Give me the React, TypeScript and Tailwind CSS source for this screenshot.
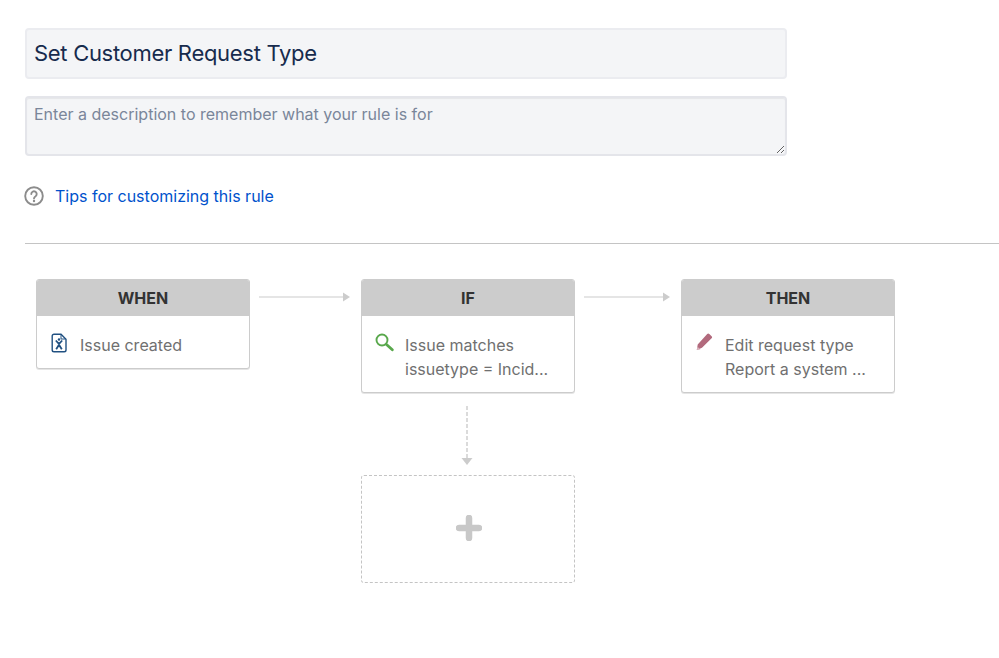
import React from 'react';

const font = { fontFamily: 'Inter, "Liberation Sans", sans-serif' };

function ArrowRight({ width }: { width: number }) {
  return (
    <svg width={width} height={10} viewBox={`0 0 ${width} 10`} className="shrink-0">
      <line x1="0" y1="5" x2={width - 6} y2="5" stroke="#cccccc" strokeWidth="1.2" />
      <path d={`M${width - 7} 0.5 L${width} 5 L${width - 7} 9.5 Z`} fill="#cccccc" />
    </svg>
  );
}

function ArrowDown() {
  return (
    <svg width={14} height={60} viewBox="0 0 14 60" className="block">
      <line x1="7" y1="0" x2="7" y2="52" stroke="#cccccc" strokeWidth="1.4" strokeDasharray="4 2" />
      <path d="M1.500 52 L12.500 52 L7 59 Z" fill="#cccccc" />
    </svg>
  );
}

function IssueIcon() {
  return (
    <svg width={18} height={20} viewBox="0 0 18 20" fill="none">
      <path d="M4 1.200h7l5 5V17a1.800 1.800 0 0 1-1.800 1.800H4A1.800 1.800 0 0 1 2.200 17V3A1.800 1.800 0 0 1 4 1.200Z" stroke="#205081" strokeWidth="1.400" />
      <path d="M11 1.500V6h4.600" stroke="#205081" strokeWidth="1" />
      <circle cx="9" cy="6.500" r="1.200" fill="#205081" />
      <path d="M5.800 7.500l3.200 3.400 3.200-3.400M9 10.500v1.500M6.200 16.200l2.800-4.400 2.800 4.400" stroke="#205081" strokeWidth="1.800" />
    </svg>
  );
}

function SearchIcon() {
  return (
    <svg width={19} height={19} viewBox="0 0 19 19" fill="none">
      <circle cx="7" cy="7" r="5.500" stroke="#59a84c" strokeWidth="1.900" />
      <path d="M11.500 11.500l5.800 5.300" stroke="#59a84c" strokeWidth="2.800" strokeLinecap="round" />
    </svg>
  );
}

function PencilIcon() {
  return (
    <svg width={18} height={18} viewBox="0 0 18 18">
      <path d="M12.200 1a1.500 1.500 0 0 1 2.100 0l2.300 2.200a1.500 1.500 0 0 1 0 2.100L7 14.800 1.800 17l0.900-5.600Z" fill="#b26a7d" />
      <path d="M1.800 17l0.600-3.600 3 3.100Z" fill="#d9b3bd" />
    </svg>
  );
}

function HelpIcon() {
  return (
    <svg width={20} height={20} viewBox="0 0 20 20" fill="none" className="-ml-[1px]">
      <circle cx="10" cy="10" r="8.800" stroke="#8c8c8c" strokeWidth="1.900" />
      <path d="M7.300 8a2.700 2.700 0 1 1 4.300 2.200c-1 .7-1.600 1.200-1.600 2.200" stroke="#8c8c8c" strokeWidth="1.900" strokeLinecap="round" />
      <circle cx="10" cy="15" r="1.200" fill="#8c8c8c" />
    </svg>
  );
}

function RuleCard({ title, icon, lines }: { title: string; icon: React.ReactNode; lines: string[] }) {
  return (
    <div className="w-[214px] shrink-0 overflow-hidden rounded-[3px] border border-[#cccccc] bg-white shadow-[0_1px_0_rgba(0,0,0,0.1)]">
      <div className="flex h-[36px] items-center justify-center bg-[#cccccc] text-[16px] font-bold text-[#333333]">
        {title}
      </div>
      <div className="flex gap-[11px] pb-[11px] pl-[13px] pt-[17px]">
        <div className="w-[19px] shrink-0">{icon}</div>
        <div className="text-[16px] leading-[24px] text-[#707070]">
          {lines.map((line) => (
            <div key={line}>{line}</div>
          ))}
        </div>
      </div>
    </div>
  );
}

export default function App() {
  return (
    <div className="h-[658px] w-[999px] overflow-hidden bg-white pt-[28px]" style={font}>
      <div className="pl-[25px]">
        <input
          readOnly
          value="Set Customer Request Type"
          className="block h-[51px] w-[762px] rounded-[4px] border-2 border-[#ebecf0] bg-[#f4f5f7] px-[7px] pb-[2px] text-[22px] tracking-[-0.3px] text-[#172b4d] outline-none"
          style={font}
        />
        <textarea
          readOnly
          placeholder="Enter a description to remember what your rule is for"
          className="mt-[17px] block h-[60px] w-[762px] rounded-[4px] border-2 border-[#e4e5ea] bg-[#f4f5f7] px-[7px] py-[5px] text-[16px] leading-[22px] text-[#172b4d] shadow-[inset_0_1px_1px_rgba(0,0,0,0.06)] outline-none placeholder:text-[#7a869a]"
          style={font}
        />
        <div className="mt-[30px] flex h-[20px] items-center gap-[11px]">
          <HelpIcon />
          <a href="#" className="text-[16px] text-[#0052cc]">
            Tips for customizing this rule
          </a>
        </div>
      </div>

      <div className="mt-[37px] ml-[25px] h-px bg-[#c4c4c4]" />

      <div className="mt-[35px] flex items-start pl-[36px]">
        <RuleCard title="WHEN" icon={<IssueIcon />} lines={['Issue created']} />
        <div className="ml-[9px] mr-[11px] mt-[13px] flex">
          <ArrowRight width={91} />
        </div>
        <div className="flex w-[214px] shrink-0 flex-col">
          <RuleCard title="IF" icon={<SearchIcon />} lines={['Issue matches', 'issuetype = Incid...']} />
          <div className="mt-[13px] flex justify-center pr-[2px]">
            <ArrowDown />
          </div>
          <div className="mt-[9px] flex h-[108px] items-center justify-center rounded-[3px] border border-dashed border-[#c4c4c4]">
            <svg width={26} height={26} viewBox="0 0 26 26" className="-mt-[3px] ml-[1px]">
              <path d="M13 3v20M3 13h20" stroke="#c8c8c8" strokeWidth="6.500" strokeLinecap="round" />
            </svg>
          </div>
        </div>
        <div className="ml-[9px] mr-[11px] mt-[13px] flex">
          <ArrowRight width={86} />
        </div>
        <RuleCard title="THEN" icon={<PencilIcon />} lines={['Edit request type', 'Report a system ...']} />
      </div>
    </div>
  );
}
